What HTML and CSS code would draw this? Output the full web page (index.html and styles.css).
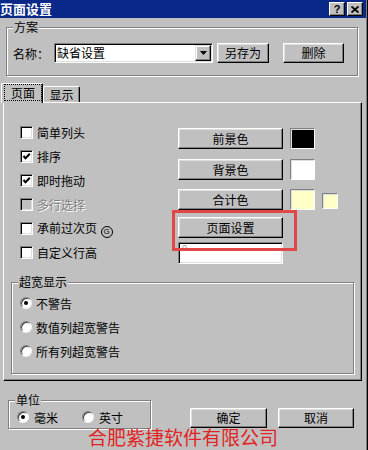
FILE: index.html
```html
<!DOCTYPE html>
<html lang="zh-CN">
<head>
<meta charset="utf-8">
<title>页面设置</title>
<link rel="stylesheet" href="styles.css">
</head>
<body>
<div class="window">
  <div class="titlebar">
    <span class="title">页面设置</span>
    <div class="tbtns">
      <span class="tbtn">?</span>
      <span class="tbtn"><svg width="8" height="7" viewBox="0 0 8 7"><path d="M0.5 0.5 L7.5 6.5 M7.5 0.5 L0.5 6.5" stroke="#000" stroke-width="1.8"/></svg></span>
    </div>
  </div>

  <div class="group scheme">
    <span class="group-label">方案</span>
    <div class="scheme-row">
      <span class="name-lbl">名称：</span>
      <div class="combo">
        <span class="combo-text">缺省设置</span>
        <span class="combo-btn"><svg width="7" height="4" viewBox="0 0 7 4"><path d="M0 0 H7 L3.5 4 Z" fill="#000"/></svg></span>
      </div>
      <button class="btn saveas">另存为</button>
      <button class="btn del">删除</button>
    </div>
  </div>

  <div class="tabs">
    <div class="tab active"><span class="focus">页面</span></div>
    <div class="tab">显示</div>
  </div>

  <div class="panel">
    <div class="panel-top">
      <div class="checks">
        <div class="chk-row"><span class="chk"></span><span>简单列头</span></div>
        <div class="chk-row"><span class="chk"><svg width="9" height="9" viewBox="0 0 9 9"><path d="M1.5 4 L3.5 6.2 L7.8 1.8" stroke="#000" stroke-width="2" fill="none"/></svg></span><span>排序</span></div>
        <div class="chk-row"><span class="chk"><svg width="9" height="9" viewBox="0 0 9 9"><path d="M1.5 4 L3.5 6.2 L7.8 1.8" stroke="#000" stroke-width="2" fill="none"/></svg></span><span>即时拖动</span></div>
        <div class="chk-row disabled"><span class="chk"></span><span>多行选择</span></div>
        <div class="chk-row"><span class="chk"></span><span>承前过次页 <span class="circ">G</span></span></div>
        <div class="chk-row"><span class="chk"></span><span>自定义行高</span></div>
      </div>
      <div class="colors">
        <div class="color-row r1"><button class="btn cbtn">前景色</button><span class="swatch black"></span></div>
        <div class="color-row r2"><button class="btn cbtn">背景色</button><span class="swatch white"></span></div>
        <div class="color-row r3"><button class="btn cbtn">合计色</button><span class="swatch yellow"></span><span class="swatch small yellow"></span></div>
        <div class="color-row r4"><button class="btn cbtn">页面设置</button></div>
        <div class="textbox"><span class="tb-text">0</span></div>
      </div>
    </div>

    <div class="group wide">
      <span class="group-label">超宽显示</span>
      <div class="radio-row"><span class="radio on"></span><span>不警告</span></div>
      <div class="radio-row"><span class="radio"></span><span>数值列超宽警告</span></div>
      <div class="radio-row"><span class="radio"></span><span>所有列超宽警告</span></div>
    </div>
  </div>

  <div class="footer">
    <div class="group unit">
      <span class="group-label">单位</span>
      <div class="unit-row">
        <span class="radio on"></span><span>毫米</span>
        <span class="radio inch"></span><span>英寸</span>
      </div>
    </div>
    <div class="actions">
      <button class="btn ok">确定</button>
      <button class="btn cancel">取消</button>
    </div>
  </div>

  <div class="company">合肥紫捷软件有限公司</div>
</div>
<div class="highlight"></div>
</body>
</html>
```

FILE: styles.css
```css
* { box-sizing: border-box; }

body {
  margin: 0;
  width: 368px;
  height: 450px;
  overflow: hidden;
  position: relative;
  background: #c0c0c0;
  font-family: "Noto Sans CJK SC", "Noto Sans", sans-serif;
  font-size: 12px;
  color: #000;
}

.window {
  width: 368px;
  height: 450px;
  padding-right: 2px;
  box-shadow: inset -1px 0 #000, inset -2px 0 #808080;
}

/* title bar */
.titlebar {
  height: 18px;
  background: #0a2888;
  display: flex;
  align-items: center;
  justify-content: space-between;
  padding: 0 3px 0 0;
}
.title {
  color: #fff;
  font-weight: bold;
  font-size: 13px;
  line-height: 18px;
}
.tbtns { display: flex; gap: 2px; }
.tbtn {
  width: 16px;
  height: 14px;
  background: #c0c0c0;
  border: 1px solid;
  border-color: #fff #000 #000 #fff;
  box-shadow: inset -1px -1px #808080;
  display: flex;
  align-items: center;
  justify-content: center;
  font: bold 11px "Liberation Sans", sans-serif;
  line-height: 1;
}

/* group boxes */
.group {
  border: 1px solid #808080;
  box-shadow: inset 1px 1px #fff, 1px 1px #fff;
}
.group-label {
  display: block;
  width: max-content;
  margin: -8px 0 0 6px;
  padding: 0 1px;
  line-height: 14px;
  background: #c0c0c0;
}

/* buttons */
.btn {
  font-family: inherit;
  font-size: 12px;
  color: #000;
  background: #c0c0c0;
  border: 1px solid;
  border-color: #fff #000 #000 #fff;
  box-shadow: inset -1px -1px #808080, inset 1px 1px #dfdfdf;
  padding: 0;
  margin: 0;
  height: 20px;
  line-height: 16px;
  text-align: center;
}

/* scheme group */
.scheme {
  margin: 9px 0 0 6px;
  width: 352px;
  height: 49px;
}
.scheme-row {
  display: flex;
  align-items: center;
  margin-top: 9px;
  padding-left: 6px;
  height: 20px;
}
.name-lbl { width: 41px; }
.combo {
  width: 159px;
  height: 20px;
  background: #fff;
  border: 1px solid;
  border-color: #808080 #fff #fff #808080;
  box-shadow: inset 1px 1px #000, inset -1px -1px #dfdfdf;
  display: flex;
  align-items: center;
  justify-content: space-between;
  padding: 1px 1px 1px 2px;
}
.combo-text { line-height: 16px; }
.combo-btn {
  width: 16px;
  height: 16px;
  background: #c0c0c0;
  border: 1px solid;
  border-color: #dfdfdf #000 #000 #dfdfdf;
  box-shadow: inset -1px -1px #808080, inset 1px 1px #fff;
  display: flex;
  align-items: center;
  justify-content: center;
}
.saveas { width: 52px; margin-left: 4px; }
.del { width: 61px; margin-left: 14px; }

/* tabs */
.tabs {
  display: flex;
  align-items: flex-end;
  height: 19px;
  margin-top: 7px;
  padding-left: 1px;
}
.tab {
  background: #c0c0c0;
  border-top: 1px solid #fff;
  border-left: 1px solid #fff;
  border-right: 1px solid #000;
  box-shadow: inset -1px 0 #808080;
  border-radius: 2px 2px 0 0;
  height: 16px;
  width: 37px;
  line-height: 15px;
  text-align: center;
}
.tab.active {
  position: relative;
  z-index: 1;
  height: 20px;
  width: 42px;
  margin-bottom: -1px;
  padding-left: 2px;
  text-align: left;
}
.focus {
  display: inline-block;
  border: 1px dotted #000;
  padding: 0 6px;
  line-height: 15px;
}

/* panel */
.panel {
  margin-left: 3px;
  width: 359px;
  height: 279px;
  border: 1px solid;
  border-color: #fff #000 #000 #fff;
  box-shadow: inset -1px -1px #808080;
}
.panel-top {
  display: flex;
  padding: 17px 0 0 16px;
}
.checks { width: 158px; }
.chk-row {
  height: 24px;
  display: flex;
  align-items: center;
  gap: 4px;
}
.chk {
  width: 13px;
  height: 13px;
  background: #fff;
  border: 1px solid;
  border-color: #808080 #fff #fff #808080;
  box-shadow: inset 1px 1px #000, inset -1px -1px #dfdfdf;
  display: flex;
  align-items: center;
  justify-content: center;
  flex: none;
}
.chk-row.disabled .chk { background: #c0c0c0; }
.chk-row.disabled span:last-child {
  color: #808080;
  text-shadow: 1px 1px #fff;
}
.circ {
  display: inline-block;
  width: 12px;
  height: 12px;
  margin-left: 1px;
  border: 1px solid #000;
  border-radius: 50%;
  font: 8px/10px "Liberation Sans", sans-serif;
  text-align: center;
  vertical-align: -1px;
}

.colors { display: flex; flex-direction: column; }
.color-row {
  display: flex;
  align-items: center;
  height: 21px;
}
.color-row.r1 { margin-top: 8px; }
.color-row.r2 { margin-top: 10px; }
.color-row.r3 { margin-top: 9px; }
.color-row.r4 { margin-top: 7px; }
.cbtn { width: 105px; height: 21px; }
.swatch {
  width: 25px;
  height: 21px;
  margin-left: 7px;
  border: 1px solid;
  border-color: #808080 #fff #fff #808080;
  box-shadow: inset 1px 1px #dfdfdf;
}
.swatch.black { background: #000; }
.swatch.white { background: #fff; }
.swatch.yellow { background: #ffffc8; }
.swatch.small { width: 16px; height: 16px; margin-top: 2px; }
.textbox {
  margin-top: 4px;
  width: 105px;
  height: 22px;
  background: #fff;
  border: 1px solid;
  border-color: #808080 #fff #fff #808080;
  box-shadow: inset 1px 1px #000, inset -1px -1px #dfdfdf;
  padding: 1px 0 0 3px;
}
.tb-text {
  display: block;
  font: 9px/9px "Liberation Sans", sans-serif;
  color: #a0a0a0;
}

/* wide display group */
.wide {
  margin: 18px 0 0 7px;
  width: 343px;
  height: 92px;
}
.radio-row {
  height: 24px;
  display: flex;
  align-items: center;
  gap: 4px;
  padding-left: 8px;
}
.radio-row:first-of-type { margin-top: 2px; }
.radio {
  width: 12px;
  height: 12px;
  border-radius: 50%;
  background: #fff;
  border: 1px solid;
  border-color: #808080 #f0f0f0 #f0f0f0 #808080;
  box-shadow: inset 1px 1px #404040;
  display: inline-flex;
  align-items: center;
  justify-content: center;
  flex: none;
}
.radio.on::after {
  content: "";
  width: 4px;
  height: 4px;
  border-radius: 50%;
  background: #000;
}

/* footer */
.footer {
  display: flex;
  align-items: flex-start;
}
.unit {
  margin: 19px 0 0 8px;
  width: 143px;
  height: 29px;
}
.unit-row {
  display: flex;
  align-items: center;
  height: 20px;
  padding-left: 8px;
  gap: 5px;
}
.radio.inch { margin-left: 19px; }
.actions {
  display: flex;
  gap: 11px;
  margin: 27px 0 0 39px;
}
.ok { width: 77px; }
.cancel { width: 76px; }

.company {
  text-align: center;
  font-family: "Liberation Sans", "Noto Sans CJK SC", sans-serif;
  font-size: 19px;
  line-height: 19px;
  color: #e02424;
}

/* annotation overlay */
.highlight {
  position: absolute;
  left: 172px;
  top: 210px;
  width: 125px;
  height: 41px;
  border: 3px solid #e04848;
}
```
